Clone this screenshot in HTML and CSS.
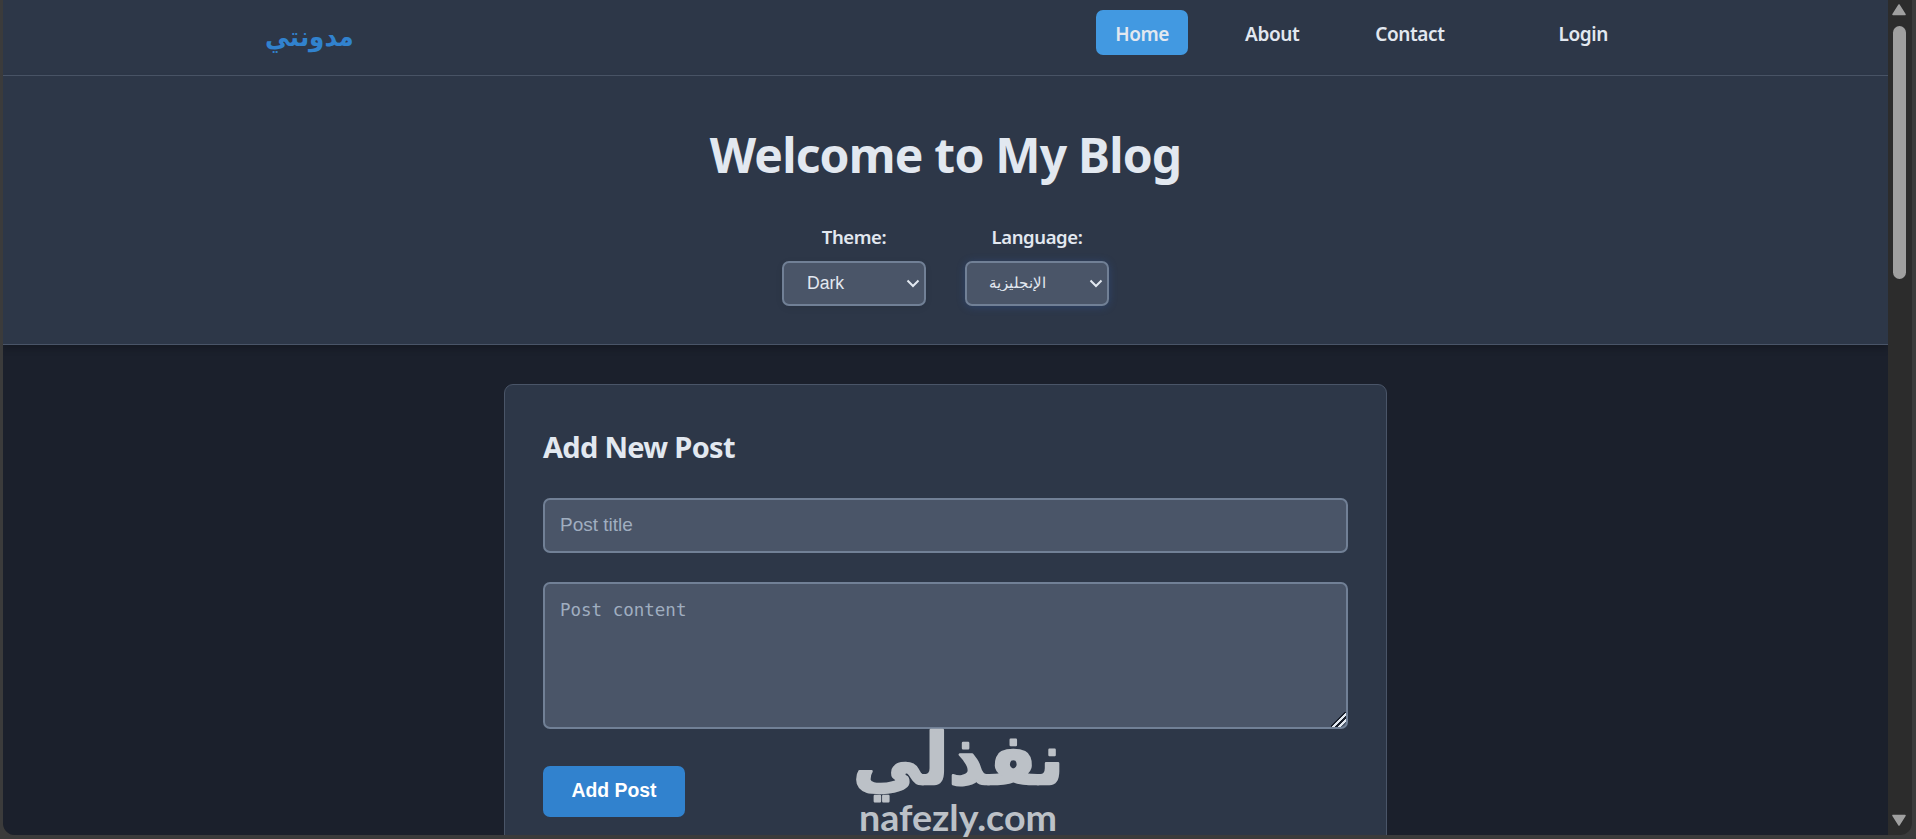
FILE: index.html
```
<!DOCTYPE html>
<html lang="en">
<head>
    <meta charset="UTF-8">
    <meta name="viewport" content="width=device-width, initial-scale=1.0">
    <title>My Blog</title>
    <link rel="stylesheet" href="styles.css">
</head>
<body>
    <div class="window">
        <div class="page">
            <nav class="navbar">
                <a class="logo" href="#" lang="ar" dir="rtl">مدونتي</a>
                <ul class="nav-links">
                    <li><a class="active" href="#">Home</a></li>
                    <li><a href="#">About</a></li>
                    <li><a href="#">Contact</a></li>
                    <li class="login"><a href="#">Login</a></li>
                </ul>
            </nav>

            <header class="hero">
                <h1>Welcome to My Blog</h1>
                <div class="controls">
                    <div class="control">
                        <label for="themeSelect">Theme:</label>
                        <div class="select-box">
                            <select id="themeSelect">
                                <option>Dark</option>
                            </select>
                            <svg class="arrow" width="14" height="9" viewBox="0 0 14 9"><path d="M1.5 1.5 L7 7 L12.5 1.5"/></svg>
                        </div>
                    </div>
                    <div class="control">
                        <label for="languageSelect">Language:</label>
                        <div class="select-box focused">
                            <select id="languageSelect" class="arabic">
                                <option>الإنجليزية</option>
                            </select>
                            <svg class="arrow" width="14" height="9" viewBox="0 0 14 9"><path d="M1.5 1.5 L7 7 L12.5 1.5"/></svg>
                        </div>
                    </div>
                </div>
            </header>

            <main class="card">
                <h2>Add New Post</h2>
                <form>
                    <input type="text" placeholder="Post title">
                    <textarea placeholder="Post content"></textarea>
                    <button type="button">Add Post</button>
                </form>
            </main>
        </div>

        <div class="scrollbar">
            <svg width="14" height="12" viewBox="0 0 14 12"><path d="M7 1 L13 10.5 H1 Z"/></svg>
            <div class="thumb"></div>
            <svg class="down" width="14" height="12" viewBox="0 0 14 12"><path d="M1 1.5 H13 L7 11 Z"/></svg>
        </div>
    </div>

    <!-- watermark -->
    <svg class="watermark" width="250" height="149" viewBox="835 690 250 149">
        <text class="mark-ar" x="853" y="784" textLength="211" lengthAdjust="spacingAndGlyphs">نفذلي</text>
        <text class="mark-en" x="859" y="831" textLength="198" lengthAdjust="spacingAndGlyphs">nafezly.com</text>
    </svg>
</body>
</html>
```
FILE: styles.css
```
* {
    box-sizing: border-box;
}

body {
    margin: 0;
    height: 839px;
    overflow: hidden;
    padding: 0 4px 3px 3px;
    background-color: #3b3b3b;
    font-family: "Noto Sans", "Open Sans", sans-serif;
    color: #e2e8f0;
}

.window {
    display: flex;
    height: 835px;
    overflow: hidden;
    border-radius: 0 0 12px 12px;
    background-color: #2c2c2c;
}

.page {
    flex: 1;
    overflow: hidden;
    background-color: #1b202c;
}

/* Navigation */
.navbar {
    display: flex;
    justify-content: space-between;
    align-items: flex-start;
    height: 76px;
    padding: 10px 261px 0 262px;
    background-color: #2d3748;
    border-bottom: 1px solid #4a5568;
}

.logo {
    margin-top: 6px;
    font-family: "DejaVu Sans", sans-serif;
    font-size: 27px;
    font-weight: bold;
    line-height: 42px;
    color: #3182ce;
    text-decoration: none;
    transform: scaleX(0.91);
    transform-origin: left;
}

.nav-links {
    display: flex;
    gap: 38px;
    margin: 0;
    padding: 0;
    list-style: none;
}

.nav-links a {
    display: block;
    height: 45px;
    padding: 0 19px;
    border-radius: 7px;
    font-size: 19px;
    font-weight: 600;
    letter-spacing: -0.4px;
    line-height: 48px;
    color: #e2e8f0;
    text-decoration: none;
}

.nav-links .active {
    background-color: #4299e1;
}

.nav-links .login {
    margin-left: 38px;
}

/* Header */
.hero {
    height: 269px;
    padding-top: 41px;
    background-color: #2d3748;
    border-bottom: 1px solid #4a5568;
    box-shadow: 0 4px 7px rgba(0, 0, 0, 0.2);
    text-align: center;
}

h1 {
    margin: 0;
    font-size: 48px;
    font-weight: 700;
    letter-spacing: -0.8px;
    line-height: 76px;
}

.controls {
    display: flex;
    justify-content: center;
    gap: 39px;
    margin-top: 29px;
}

.control {
    display: flex;
    flex-direction: column;
    align-items: center;
    gap: 10px;
}

label {
    font-size: 18.5px;
    font-weight: 600;
    letter-spacing: -0.4px;
    line-height: 29px;
}

.select-box {
    position: relative;
    width: 144px;
    height: 45px;
    border-radius: 7px;
    box-shadow: 0 2px 7px rgba(0, 0, 0, 0.08);
}

.focused {
    box-shadow: 0 1px 9px rgba(49, 100, 190, 0.3);
}

select {
    appearance: none;
    width: 100%;
    height: 100%;
    padding: 0 22px 2px 23px;
    border: 2px solid #718096;
    border-radius: 7px;
    background-color: #4a5568;
    font-family: "Liberation Sans", Arial, sans-serif;
    font-size: 17.6px;
    color: #e2e8f0;
}

.arabic {
    padding-left: 22px;
    font-size: 14.5px;
}

.arrow {
    position: absolute;
    right: 6px;
    top: 18px;
    fill: none;
    stroke: #e2e8f0;
    stroke-width: 2;
}

/* Post form */
.card {
    width: 883px;
    height: 600px;
    margin: 39px auto 0;
    padding: 38px;
    background-color: #2d3748;
    border: 1px solid #4a5568;
    border-radius: 9px;
}

h2 {
    margin: 0 0 27px;
    font-size: 29px;
    font-weight: 700;
    letter-spacing: -0.7px;
    line-height: 48px;
}

form {
    display: flex;
    flex-direction: column;
    align-items: flex-start;
}

input,
textarea {
    width: 100%;
    border: 2px solid #718096;
    border-radius: 7px;
    background-color: #4a5568;
    color: #e2e8f0;
}

input {
    height: 55px;
    padding: 0 15px 2px;
    font-family: "Liberation Sans", Arial, sans-serif;
    font-size: 19px;
}

textarea {
    height: 147px;
    margin: 29px 0 37px;
    padding: 16px 15px;
    font-family: "DejaVu Sans Mono", monospace;
    font-size: 17.5px;
    resize: vertical;
}

textarea::-webkit-resizer {
    background: linear-gradient(135deg, transparent 45%, #1a202c 45% 52%, #e2e8f0 52% 62%, #1a202c 62% 72%, #e2e8f0 72% 82%, transparent 82%);
}

::placeholder {
    color: #a0aec0;
}

button {
    width: 142px;
    height: 51px;
    padding: 0 0 3px;
    border: none;
    border-radius: 7px;
    background-color: #3182ce;
    font-family: "Liberation Sans", Arial, sans-serif;
    font-size: 19.4px;
    font-weight: bold;
    color: white;
    cursor: pointer;
}

/* Scrollbar */
.scrollbar {
    display: flex;
    flex-direction: column;
    align-items: center;
    width: 24px;
    padding: 4px 2px 9px 0;
}

.scrollbar svg {
    fill: #a0a0a0;
    stroke: #a0a0a0;
    stroke-width: 1.5;
    stroke-linejoin: round;
}

.scrollbar .down {
    margin-top: auto;
}

.thumb {
    width: 13px;
    height: 253px;
    margin-top: 10px;
    border-radius: 7px;
    background-color: #a0a0a0;
}

/* Watermark */
.watermark {
    position: absolute;
    left: 835px;
    top: 690px;
    fill: #bcc1c7;
}

.mark-ar {
    font-family: "DejaVu Sans", sans-serif;
    font-size: 71px;
    font-weight: bold;
    stroke: #bcc1c7;
    stroke-width: 2.5;
    stroke-linejoin: round;
}

.mark-en {
    font-family: Lato, sans-serif;
    font-size: 37px;
    font-weight: bold;
}
```
